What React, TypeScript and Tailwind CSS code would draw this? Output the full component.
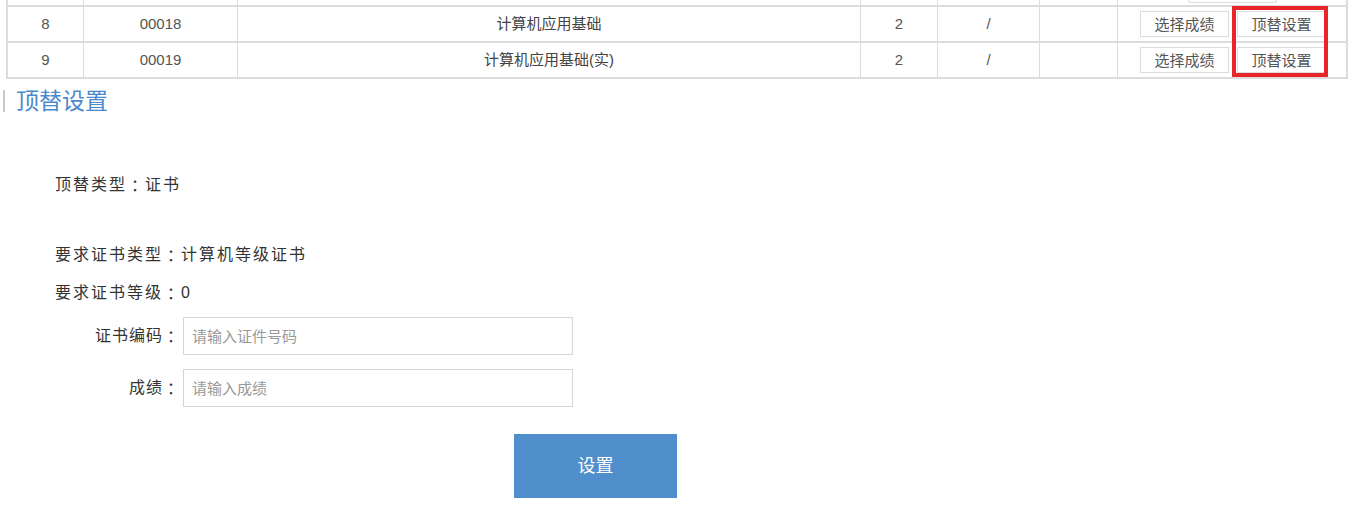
const cols = [76, 154, 623, 77, 102, 78, 230];

const rows = [
  { no: '8', code: '00018', name: '计算机应用基础', credit: '2', score: '/' },
  { no: '9', code: '00019', name: '计算机应用基础(实)', credit: '2', score: '/' },
];

function Cell({ w, children, last }: { w: number; children?: React.ReactNode; last?: boolean }) {
  return (
    <div
      className={[
        'flex items-center justify-center shrink-0 h-full',
        last ? 'border-r-2 border-[#dcdcdc]' : 'border-r border-[#dcdcdc]',
      ].join(' ')}
      style={{ width: w }}
    >
      {children}
    </div>
  );
}

function SmallButton({ label }: { label: string }) {
  return (
    <button className="w-[89px] h-[26px] border border-[#dcdcdc] bg-white text-[15px] text-[#555] leading-none">
      {label}
    </button>
  );
}

// centred full-width colon, as in the reference
const Colon = () => <span className="font-['Noto_Sans_CJK_TC',sans-serif] leading-none">：</span>;

export default function App() {
  return (
    <div className="w-[1359px] h-[507px] bg-white overflow-hidden font-['Liberation_Sans','Noto_Sans_CJK_SC',sans-serif] text-[#333]">
      {/* Table */}
      <div className="relative ml-[6px] w-[1342px] border-l-2 border-[#dcdcdc]">
        {/* row above, cut off */}
        <div className="flex h-[7px] border-b-2 border-[#dcdcdc]">
          {cols.map((w, i) => (
            <Cell key={i} w={w} last={i === cols.length - 1}>
              {i === cols.length - 1 && (
                <div className="self-start w-[89px] h-[3px] border-x border-b border-[#dcdcdc] rounded-b-sm" />
              )}
            </Cell>
          ))}
        </div>

        {rows.map((r) => (
          <div key={r.no} className="flex h-[36px] border-b-2 border-[#dcdcdc] text-[15px] text-[#555]">
            <Cell w={cols[0]}>{r.no}</Cell>
            <Cell w={cols[1]}>{r.code}</Cell>
            <Cell w={cols[2]}>
              <span className="text-[#444]">{r.name}</span>
            </Cell>
            <Cell w={cols[3]}>{r.credit}</Cell>
            <Cell w={cols[4]}>{r.score}</Cell>
            <Cell w={cols[5]} />
            <Cell w={cols[6]} last>
              <div className="flex gap-[8px] pl-[2px]">
                <SmallButton label="选择成绩" />
                <SmallButton label="顶替设置" />
              </div>
            </Cell>
          </div>
        ))}

        {/* red highlight annotation */}
        <div className="absolute left-[1224px] top-[6px] w-[96px] h-[71px] border-4 border-[#e8262a]" />
      </div>

      {/* Heading */}
      <div className="mt-[11px] ml-[3px] flex items-center h-[22px]">
        <div className="w-[2px] h-[22px] bg-[#c8c8c8]" />
        <div className="ml-[11px] text-[23px] leading-none text-[#4a89cb]">顶替设置</div>
      </div>

      {/* Form */}
      <div className="pl-[55px] text-[16px]">
        <div className="mt-[63px] h-[20px] flex items-center tracking-[2px]">
          顶替类型<Colon />证书
        </div>
        <div className="mt-[50px] h-[20px] flex items-center tracking-[2px]">
          要求证书类型<Colon />计算机等级证书
        </div>
        <div className="mt-[18px] h-[20px] flex items-center tracking-[2px]">
          要求证书等级<Colon />0
        </div>

        <div className="mt-[14px] flex items-center">
          <label className="w-[125px] h-[20px] flex items-center justify-end tracking-[1px]">
            证书编码<Colon />
          </label>
          <input
            className="ml-[3px] w-[390px] h-[38px] border border-[#d6d6d6] px-[8px] text-[15px] placeholder:text-[#999] outline-none"
            placeholder="请输入证件号码"
          />
        </div>
        <div className="mt-[14px] flex items-center">
          <label className="w-[125px] h-[20px] flex items-center justify-end tracking-[1px]">
            成绩<Colon />
          </label>
          <input
            className="ml-[3px] w-[390px] h-[38px] border border-[#d6d6d6] px-[8px] text-[15px] placeholder:text-[#999] outline-none"
            placeholder="请输入成绩"
          />
        </div>

        <button className="mt-[27px] ml-[459px] w-[163px] h-[64px] bg-[#508ecc] text-white text-[18px]">
          设置
        </button>
      </div>
    </div>
  );
}
